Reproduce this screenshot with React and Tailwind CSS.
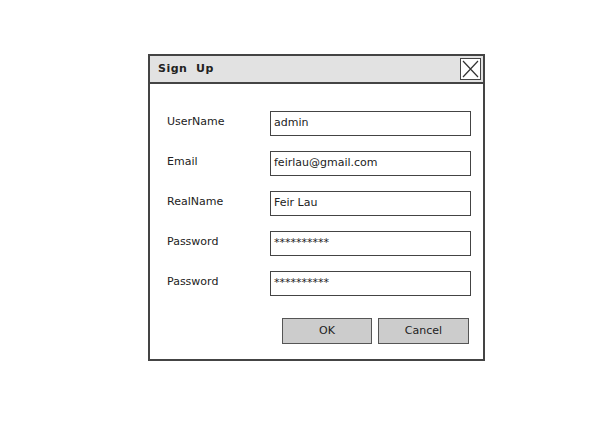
const fields = [
  { label: "UserName", value: "admin" },
  { label: "Email", value: "feirlau@gmail.com" },
  { label: "RealName", value: "Feir Lau" },
  { label: "Password", value: "**********" },
  { label: "Password", value: "**********" },
];

const App = () => {
  return (
    <div
      className="w-[613px] h-[444px] bg-white pt-[54px] pl-[148px] text-[#222]"
      style={{ fontFamily: '"DejaVu Sans", sans-serif' }}
    >
      <div className="w-[337px] h-[307px] border-2 border-[#444] flex flex-col">
        <div className="h-[28px] bg-[#e2e2e2] border-b-2 border-[#444] flex items-center justify-between pl-[8px] pr-[2px]">
          <span className="text-[11px] font-bold tracking-[0.5px]">Sign&nbsp; Up</span>
          <div className="w-[21px] h-[22px] border border-[#444] bg-white flex items-center justify-center">
            <svg width="17" height="18" viewBox="0 0 17 18">
              <path d="M1 1 L16 17 M16 1 L1 17" stroke="#333" strokeWidth="1.2" fill="none" />
            </svg>
          </div>
        </div>

        <div className="flex flex-col gap-[15px] pt-[27px] pl-[17px]">
          {fields.map((f, i) => (
            <div key={i} className="flex items-center h-[25px]">
              <span className="w-[103px] text-[11px] -mt-[3px]">{f.label}</span>
              <div className="w-[201px] h-[25px] border-[1.5px] border-[#444] flex items-center pl-[3px] text-[11px]">
                {f.value}
              </div>
            </div>
          ))}
        </div>

        <div className="flex justify-end gap-[6px] pr-[14px] mt-[22px]">
          <button className="w-[90px] h-[26px] bg-[#cccccc] border-[1.5px] border-[#555] text-[11px]">
            OK
          </button>
          <button className="w-[91px] h-[26px] bg-[#cccccc] border-[1.5px] border-[#555] text-[11px]">
            Cancel
          </button>
        </div>
      </div>
    </div>
  );
};

export default App;
